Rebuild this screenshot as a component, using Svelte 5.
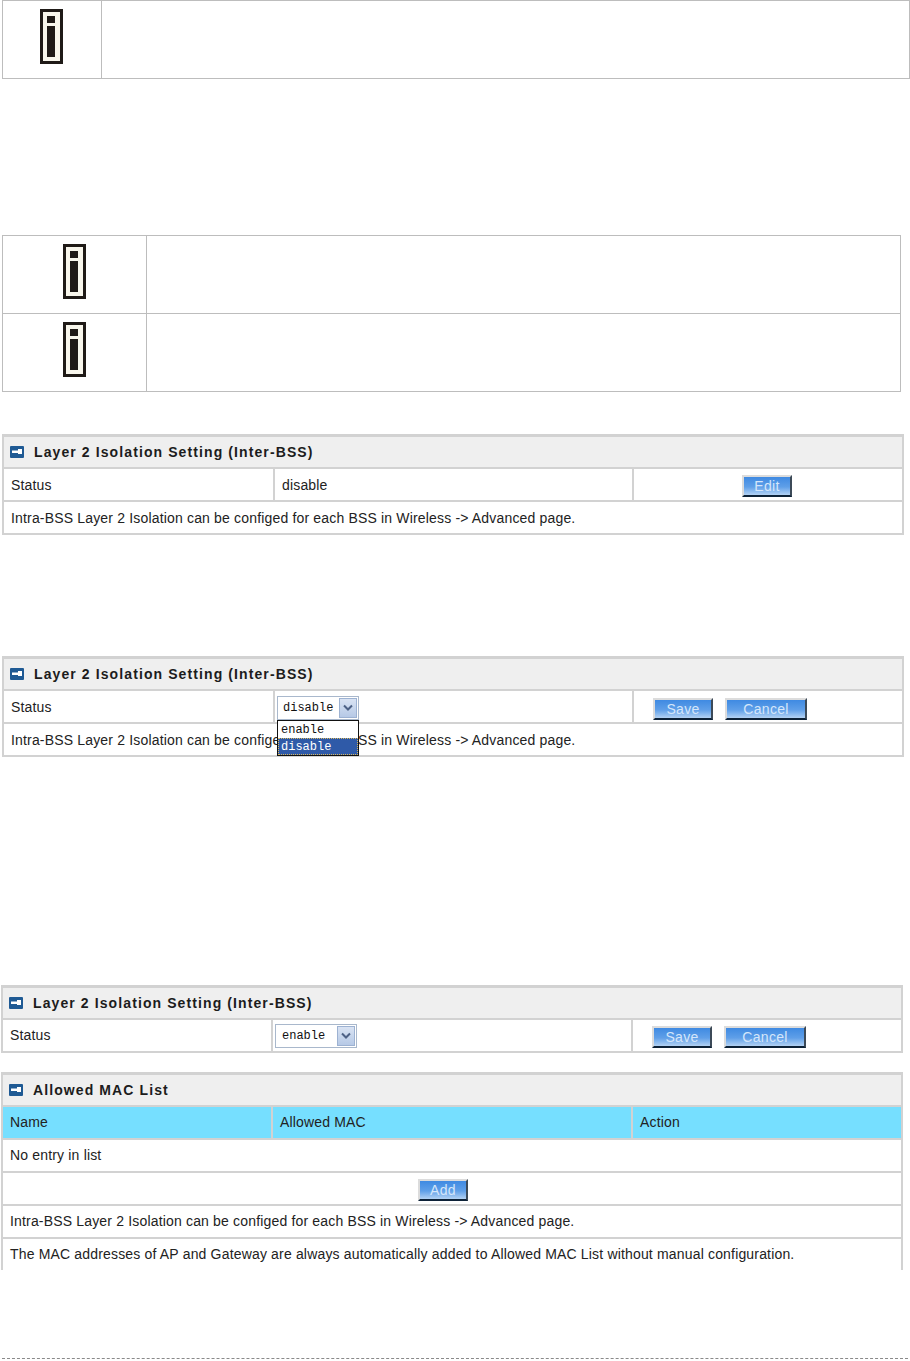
<script>
  const note = 'Intra-BSS Layer 2 Isolation can be configed for each BSS in Wireless -> Advanced page.'
  const macNote = 'The MAC addresses of AP and Gateway are always automatically added to Allowed MAC List without manual configuration.'
  const title = 'Layer 2 Isolation Setting (Inter-BSS)'
</script>

{#snippet info()}
  <svg class="info" width="23" height="55" viewBox="0 0 23 55" aria-hidden="true">
    <rect width="23" height="55" fill="#1f1a17"></rect>
    <rect x="3" y="3" width="17" height="49" fill="#f8f6ec"></rect>
    <rect x="7" y="7" width="8" height="7" fill="#1f1a17"></rect>
    <rect x="7" y="17" width="8" height="31" fill="#1f1a17"></rect>
  </svg>
{/snippet}

{#snippet heading(text)}
  <div class="heading">
    <svg width="14" height="12" viewBox="0 0 14 12" aria-hidden="true">
      <rect width="14" height="12" rx="1" fill="#1f5a94"></rect>
      <path d="M2 4.5h6V3h4v5H8V7H2z" fill="#fff"></path>
    </svg>
    <span>{text}</span>
  </div>
{/snippet}

{#snippet select(value, open)}
  <div class="select">
    <span class="value">{value}</span>
    <span class="arrow">
      <svg width="10" height="7" viewBox="0 0 10 7" aria-hidden="true">
        <path d="M1 1.5l4 4 4-4" fill="none" stroke="#4d6185" stroke-width="2"></path>
      </svg>
    </span>
    {#if open}
      <div class="menu">
        <div>enable</div>
        <div class="picked">disable</div>
      </div>
    {/if}
  </div>
{/snippet}

<main>
  <section class="notes first">
    <div class="note-row">
      <div class="icon-cell">{@render info()}</div>
      <div></div>
    </div>
  </section>

  <section class="notes second">
    <div class="note-row">
      <div class="icon-cell">{@render info()}</div>
      <div></div>
    </div>
    <div class="note-row">
      <div class="icon-cell">{@render info()}</div>
      <div></div>
    </div>
  </section>

  <section class="panel view">
    {@render heading(title)}
    <div class="row cols">
      <div class="cell">Status</div>
      <div class="cell">disable</div>
      <div class="cell center"><button class="btn edit">Edit</button></div>
    </div>
    <div class="row"><div class="cell">{note}</div></div>
  </section>

  <section class="panel editing">
    {@render heading(title)}
    <div class="row cols">
      <div class="cell">Status</div>
      <div class="cell pick">{@render select('disable', true)}</div>
      <div class="cell actions">
        <button class="btn save">Save</button>
        <button class="btn cancel">Cancel</button>
      </div>
    </div>
    <div class="row"><div class="cell">{note}</div></div>
  </section>

  <section class="panel enabled">
    {@render heading(title)}
    <div class="row cols">
      <div class="cell">Status</div>
      <div class="cell pick">{@render select('enable', false)}</div>
      <div class="cell actions">
        <button class="btn save">Save</button>
        <button class="btn cancel">Cancel</button>
      </div>
    </div>
  </section>

  <section class="panel list">
    {@render heading('Allowed MAC List')}
    <div class="row cols head">
      <div class="cell">Name</div>
      <div class="cell">Allowed MAC</div>
      <div class="cell">Action</div>
    </div>
    <div class="row"><div class="cell">No entry in list</div></div>
    <div class="row"><div class="cell center"><button class="btn add">Add</button></div></div>
    <div class="row"><div class="cell">{note}</div></div>
    <div class="row"><div class="cell">{macNote}</div></div>
  </section>

  <hr />
</main>

<style>
  :global(body) {
    margin: 0;
    background: #fff;
  }

  main {
    width: 910px;
    height: 1361px;
    overflow: hidden;
    font-family: "Liberation Sans", Arial, sans-serif;
    font-size: 14px;
    letter-spacing: 0.17px;
    color: #222;
  }

  .notes {
    margin-left: 2px;
    border: 1px solid #bdbdbd;
    border-bottom: 0;
    box-sizing: border-box;
  }

  .notes.first {
    width: 908px;
    --icon-col: 99px;
    --icon-right: 2px;
  }

  .notes.second {
    width: 899px;
    margin-top: 156px;
    --icon-col: 144px;
    --icon-right: 0px;
  }

  .note-row {
    display: grid;
    grid-template-columns: var(--icon-col) 1fr;
    height: 78px;
    box-sizing: border-box;
    border-bottom: 1px solid #bdbdbd;
  }

  .icon-cell {
    display: flex;
    align-items: center;
    justify-content: center;
    padding: 0 var(--icon-right) 6px 0;
    box-sizing: border-box;
    border-right: 1px solid #bdbdbd;
  }

  .info {
    display: block;
  }

  .panel {
    width: 902px;
    margin-left: 2px;
    box-sizing: border-box;
    border: 2px solid #d2d2d2;
    border-top-width: 3px;
  }

  .view {
    margin-top: 42px;
  }

  .editing {
    margin-top: 121px;
  }

  .enabled {
    margin: 228px 0 0 1px;
  }

  .list {
    margin: 19px 0 0 1px;
    height: 198px;
    border-bottom: 0;
  }

  .heading {
    display: flex;
    align-items: center;
    gap: 10px;
    height: 30px;
    padding: 0 0 0 6px;
    box-sizing: border-box;
    background: #efefef;
    font-weight: bold;
    letter-spacing: 1.1px;
    color: #1c1c1c;
  }

  .row {
    border-top: 2px solid #d2d2d2;
    height: 33px;
    box-sizing: border-box;
  }

  .cols {
    display: grid;
    grid-template-columns: 268px 360px 1fr;
  }

  .view .cols,
  .editing .cols {
    grid-template-columns: 269px 359px 1fr;
  }

  .cell {
    height: 100%;
    display: flex;
    align-items: center;
    padding: 0 0 2px 7px;
    box-sizing: border-box;
    white-space: nowrap;
  }

  .view .cell,
  .editing .cell {
    padding-bottom: 0;
  }

  .cols .cell + .cell {
    border-left: 2px solid #d2d2d2;
  }

  .head {
    background: #76dfff;
  }

  .center {
    justify-content: center;
    padding-left: 0;
  }

  .view .center {
    padding-right: 2px;
  }

  .list .center {
    padding-right: 18px;
  }

  .cell.pick {
    padding-left: 2px;
  }

  .actions {
    gap: 12px;
    padding-left: 19px;
  }

  .btn {
    height: 22px;
    padding: 0;
    box-sizing: border-box;
    margin-top: 3px;
    border: 2px solid;
    border-color: #dcdcdc #3c4a58 #0d2238 #dcdcdc;
    background: linear-gradient(#3f8ae2, #5f9fe8 55%, #b3d2f4);
    color: #d5e6fa;
    font: 14px "Liberation Sans", Arial, sans-serif;
    letter-spacing: 0.3px;
  }

  .editing .btn,
  .enabled .btn,
  .list .btn {
    margin-top: 5px;
  }

  .edit,
  .add {
    width: 50px;
  }

  .save {
    width: 60px;
  }

  .cancel {
    width: 82px;
  }

  .select {
    position: relative;
    display: flex;
    align-items: center;
    width: 82px;
    height: 24px;
    margin-top: 2px;
    box-sizing: border-box;
    border: 1px solid #a9b8cc;
    background: #fff;
    font-family: "Liberation Mono", "DejaVu Sans Mono", monospace;
    font-size: 12px;
    letter-spacing: 0;
    color: #111;
  }

  .value {
    flex: 1;
    padding-left: 5px;
  }

  .enabled .value {
    padding-left: 6px;
  }

  .arrow {
    display: flex;
    align-items: center;
    justify-content: center;
    width: 18px;
    height: 20px;
    margin-right: 1px;
    border: 1px solid #9db2d2;
    box-sizing: border-box;
    background: linear-gradient(#d9e3f3, #b6c9e6);
  }

  .menu {
    position: absolute;
    top: 23px;
    left: -1px;
    width: 82px;
    box-sizing: border-box;
    border: 1px solid #111;
    background: #fff;
    z-index: 2;
    font-size: 12px;
  }

  .menu div {
    height: 17px;
    line-height: 18px;
    padding-left: 3px;
  }

  .menu .picked {
    background: #2f5aa8;
    color: #fff;
    outline: 1px dotted #d8b860;
    outline-offset: -1px;
  }

  hr {
    width: 906px;
    margin: 88px 0 0 2px;
    border: 0;
    border-top: 1px dashed #8a8a8a;
  }
</style>
